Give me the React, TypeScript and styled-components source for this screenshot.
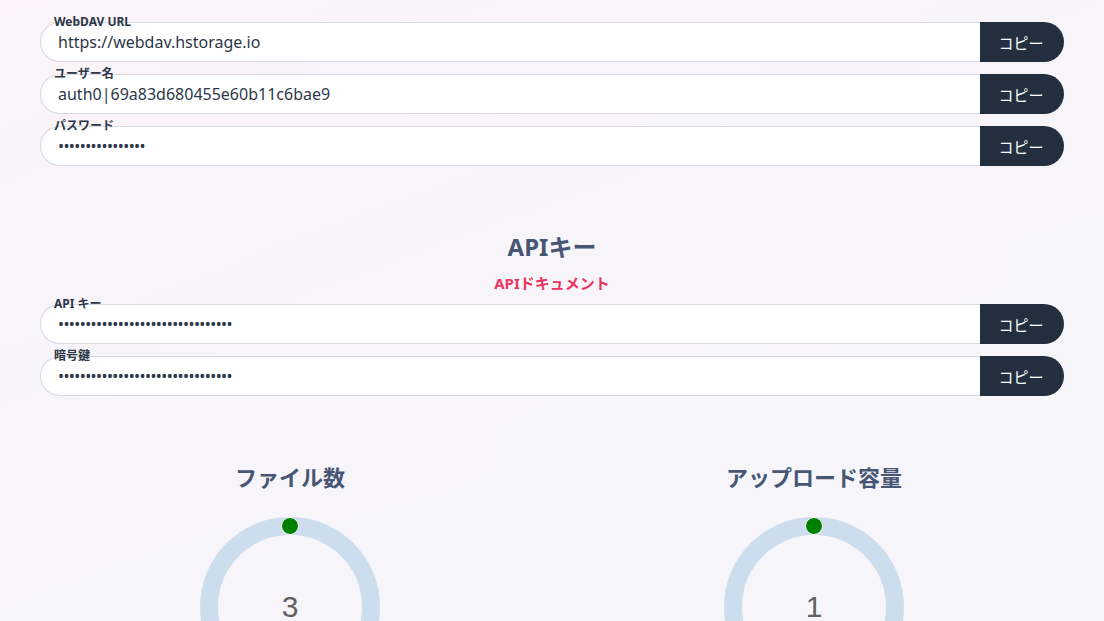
import React from "react";
import styled, { createGlobalStyle } from "styled-components";

const GlobalStyle = createGlobalStyle`
  html, body {
    margin: 0;
    padding: 0;
  }
  body {
    background: linear-gradient(160deg, #fbf3f8 0%, #f7f5fa 40%, #f6f5fa 100%);
    min-height: 100vh;
    font-family: "Noto Sans", "Noto Sans CJK JP", sans-serif;
    color: #2d3748;
  }
`;

const Page = styled.div`
  padding: 22px 40px 0;
  display: flex;
  flex-direction: column;
`;

const FieldList = styled.div`
  display: flex;
  flex-direction: column;
  gap: 12px;
`;

const Field = styled.div`
  position: relative;
  display: flex;
  height: 40px;
`;

const FieldLabel = styled.span`
  position: absolute;
  left: 14px;
  top: -8px;
  font-size: 12px;
  font-weight: 700;
  line-height: 16px;
  color: #2d3748;
`;

const FieldValue = styled.div<{ $masked?: boolean }>`
  flex: 1;
  display: flex;
  align-items: center;
  padding-left: 17px;
  background: #fff;
  border: 1px solid #d9d9e2;
  border-right: none;
  border-radius: 20px 0 0 20px;
  font-size: 16px;
  letter-spacing: ${(p) => (p.$masked ? "-0.58px" : "0")};
  color: #2d3748;
`;

const CopyButton = styled.button`
  width: 84px;
  border: none;
  border-radius: 0 20px 20px 0;
  background: #232f3e;
  color: #fff;
  font-family: "Noto Sans", "Noto Sans CJK JP", sans-serif;
  font-size: 15px;
  padding: 0 2px 0 0;
  cursor: pointer;
`;

const SectionTitle = styled.h2`
  margin: 65px 0 0;
  text-align: center;
  font-size: 24px;
  line-height: 32px;
  font-weight: 700;
  color: #465674;
`;

const DocLink = styled.a`
  margin: 10px 0 11px;
  align-self: center;
  font-size: 15px;
  line-height: 20px;
  font-weight: 700;
  color: #eb3461;
  text-decoration: none;
`;

const Stats = styled.div`
  margin-top: 66px;
  display: grid;
  grid-template-columns: 1fr 1fr;
  gap: 24px;
`;

const Stat = styled.div`
  display: flex;
  flex-direction: column;
  align-items: center;
`;

const StatTitle = styled.h3`
  margin: 0 0 25px;
  font-size: 22px;
  line-height: 30px;
  font-weight: 700;
  color: #465674;
`;

const Gauge = styled.div`
  position: relative;
  width: 180px;
  height: 180px;
`;

const GaugeValue = styled.span`
  position: absolute;
  inset: 0;
  display: flex;
  align-items: center;
  justify-content: center;
  font-family: "Liberation Sans", Arial, sans-serif;
  font-size: 30px;
  color: #616161;
`;

type Row = { label: string; value: string; masked?: boolean };

const webdav: Row[] = [
  { label: "WebDAV URL", value: "https://webdav.hstorage.io" },
  { label: "ユーザー名", value: "auth0|69a83d680455e60b11c6bae9" },
  { label: "パスワード", value: "•".repeat(16), masked: true },
];

const api: Row[] = [
  { label: "API キー", value: "•".repeat(32), masked: true },
  { label: "暗号鍵", value: "•".repeat(32), masked: true },
];

const Fields = ({ rows }: { rows: Row[] }) => (
  <FieldList>
    {rows.map((r) => (
      <Field key={r.label}>
        <FieldLabel>{r.label}</FieldLabel>
        <FieldValue $masked={r.masked}>{r.value}</FieldValue>
        <CopyButton>コピー</CopyButton>
      </Field>
    ))}
  </FieldList>
);

const Ring = () => (
  <svg width="180" height="180" viewBox="0 0 180 180">
    <circle cx="90" cy="90" r="81" fill="none" stroke="#ccdded" strokeWidth="18" />
    <circle cx="90" cy="9" r="8.5" fill="#008000" stroke="#fff" strokeWidth="1" />
  </svg>
);

const StatGauge = ({ title, value }: { title: string; value: string }) => (
  <Stat>
    <StatTitle>{title}</StatTitle>
    <Gauge>
      <Ring />
      <GaugeValue>{value}</GaugeValue>
    </Gauge>
  </Stat>
);

export default function App() {
  return (
    <>
      <GlobalStyle />
      <Page>
        <Fields rows={webdav} />
        <SectionTitle>APIキー</SectionTitle>
        <DocLink href="#">APIドキュメント</DocLink>
        <Fields rows={api} />
        <Stats>
          <StatGauge title="ファイル数" value="3" />
          <StatGauge title="アップロード容量" value="1" />
        </Stats>
      </Page>
    </>
  );
}
